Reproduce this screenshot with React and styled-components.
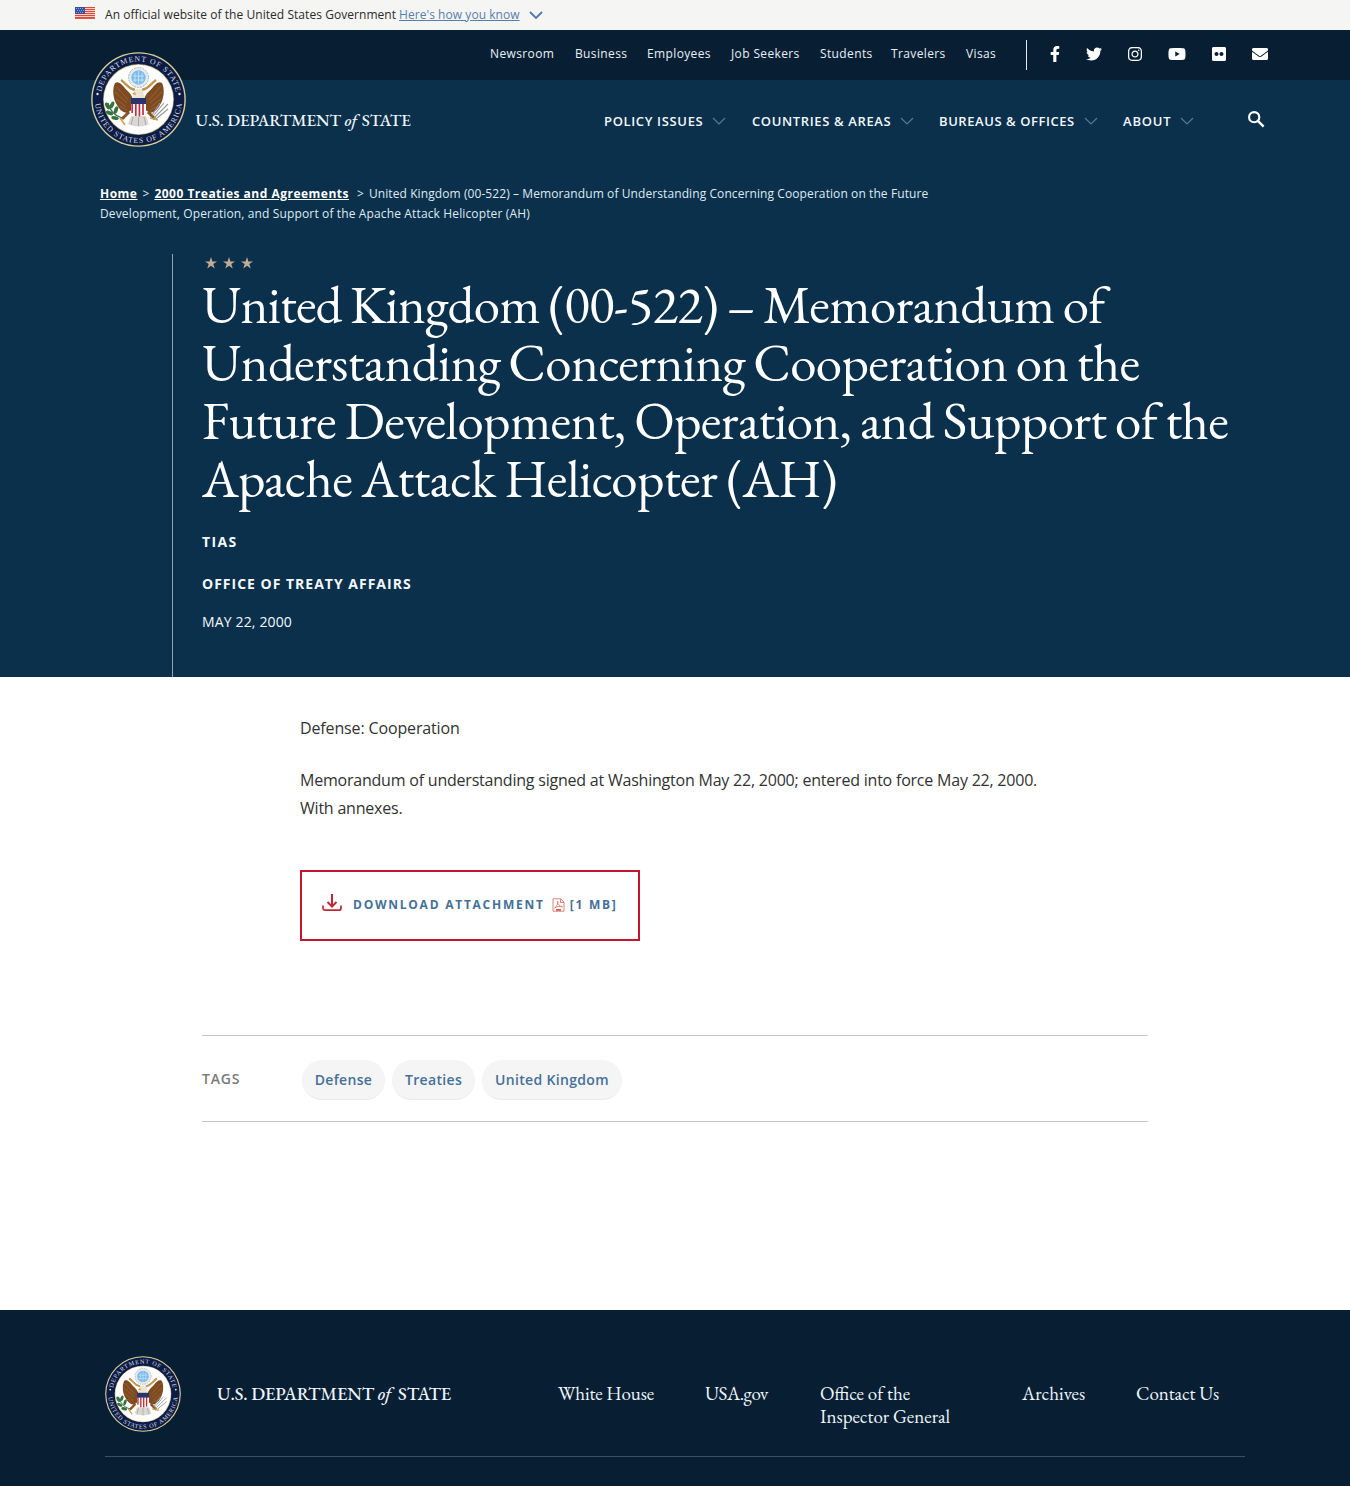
import React from "react";
import styled, { createGlobalStyle } from "styled-components";
import { FaFacebookF, FaTwitter, FaInstagram, FaYoutube, FaFlickr, FaEnvelope } from "react-icons/fa";

const navy = "#081f33";
const blue = "#0b304b";
const link = "#457099";
const serif = '"EB Garamond", "Liberation Serif", serif';

const GlobalStyle = createGlobalStyle`
  *, *::before, *::after { box-sizing: border-box; }
  body { margin: 0; background: #fff; font-family: "Open Sans", "Noto Sans", sans-serif; color: #323232; }
  p, h1 { margin: 0; }
  a { color: inherit; text-decoration: none; }
  svg { display: block; flex: none; }
`;

const Page = styled.div`
  width: 1350px;
  height: 1486px;
  overflow: hidden;
  display: flex;
  flex-direction: column;
`;

const Banner = styled.div`
  height: 30px;
  padding-left: 75px;
  background: #f5f5f4;
  display: flex;
  align-items: center;
  font-size: 12px;
  line-height: 30px;
  letter-spacing: 0.05px;
  color: #2b2b2b;
  white-space: nowrap;
  > svg:first-child { margin: -4px 10px 0 0; }
  a { color: #5580ac; text-decoration: underline; margin: 0 9px 0 3px; }
`;

const TopBar = styled.div`
  height: 50px;
  padding-left: 490px;
  background: ${navy};
  display: flex;
`;

const TopNav = styled.nav`
  display: grid;
  grid-template-columns: 85px 72px 84px 89px 71px 75px 60px;
  font-size: 12px;
  line-height: 48px;
  letter-spacing: 0.37px;
  color: #e8f0f7;
  white-space: nowrap;
`;

const Social = styled.div`
  height: 30px;
  margin-top: 10px;
  padding-left: 23px;
  border-left: 1px solid #e6edf2;
  display: flex;
  align-items: center;
  gap: 26px;
  color: #fff;
`;

const SocialLink = styled.a`
  width: ${(p) => p.$w}px;
  margin-top: -2px;
  svg { width: ${(p) => p.$w}px; height: 16px; }
`;

const Hero = styled.div`
  height: 597px;
  background: ${blue};
  display: flex;
  flex-direction: column;
`;

const MainBar = styled.div`
  height: 104px;
  padding-left: 91px;
  display: flex;
`;

const Logo = styled.div`
  width: 513px;
  margin-top: -28px;
  display: flex;
`;

const Wordmark = styled.span`
  font-family: ${serif};
  font-size: ${(p) => p.$size}px;
  font-weight: 500;
  line-height: 24px;
  letter-spacing: ${(p) => p.$ls}px;
  margin: ${(p) => p.$margin};
  color: #eef5fb;
  white-space: nowrap;
  i { margin-right: ${(p) => p.$gap}px; }
`;

const MainNav = styled.nav`
  width: 641px;
  display: grid;
  grid-template-columns: 148px 187px 184px 122px;
  padding-top: 30px;
`;

const MainLink = styled.a`
  height: 22px;
  display: flex;
  align-items: center;
  gap: 9px;
  font-size: 13px;
  font-weight: 600;
  letter-spacing: ${(p) => p.$ls}px;
  color: #f2f8fd;
  white-space: nowrap;
`;

const SearchButton = styled.a`
  padding: 31px 0 0 3px;
  color: #fff;
`;

const Crumbs = styled.div`
  width: 860px;
  margin-left: 100px;
  height: 70px;
  font-size: 12px;
  line-height: 20px;
  letter-spacing: 0.09px;
  color: #dfeaf3;
  white-space: nowrap;
  a { font-weight: 700; color: #fff; text-decoration: underline; letter-spacing: 0.49px; }
`;

const CrumbTail = styled.span`
  letter-spacing: 0.135px;
`;

const Sep = styled.span`
  margin: 0 5px 0 ${(p) => p.$left}px;
`;

const TitleBlock = styled.div`
  flex: 1;
  margin-left: 172px;
  padding-left: 30px;
  border-left: 1px solid #92a3ad;
`;

const Stars = styled.div`
  display: flex;
  gap: 6px;
  padding: 3px 0 0 2px;
  color: #c4ab93;
`;

const Title = styled.h1`
  margin: 7px 0 0 -1px;
  font-family: ${serif};
  font-weight: 400;
  font-size: 53px;
  line-height: 58px;
  color: #fff;
  white-space: nowrap;
`;

const TitleLine = styled.span`
  display: block;
  letter-spacing: ${(p) => p.$ls}px;
  word-spacing: ${(p) => p.$ws}px;
`;

const Meta = styled.p`
  margin: ${(p) => p.$top}px 0 0 -1px;
  font-size: 14px;
  line-height: 20px;
  font-weight: ${(p) => (p.$bold ? 700 : 400)};
  letter-spacing: ${(p) => p.$ls}px;
  color: #f4f9fd;
`;

const Content = styled.main`
  flex: 1;
  padding: 37px 0 0 300px;
`;

const Body = styled.p`
  font-size: 16px;
  line-height: 28px;
  letter-spacing: ${(p) => p.$ls}px;
  margin-bottom: 24px;
  white-space: nowrap;
`;

const Download = styled.a`
  width: 340px;
  height: 71px;
  margin-top: 48px;
  padding: 0 0 2px 19px;
  border: 2px solid #c5142f;
  display: flex;
  align-items: center;
  font-size: 12px;
  font-weight: 700;
  letter-spacing: 1.75px;
  color: ${link};
  white-space: nowrap;
  > svg:first-child { margin: -4px 10px 0 0; }
`;

const Pdf = styled.span`
  margin: 1px 5px 0 7px;
`;

const Tags = styled.section`
  width: 946px;
  height: 87px;
  margin: 94px 0 0 -98px;
  border: 1px solid #c6c6c6;
  border-width: 1px 0;
  display: flex;
  align-items: center;
  gap: 7px;
`;

const TagLabel = styled.span`
  width: 93px;
  font-size: 14px;
  font-weight: 600;
  letter-spacing: 0.8px;
  color: #7a7a7a;
`;

const Tag = styled.a`
  width: ${(p) => p.$w}px;
  height: 40px;
  margin-top: 2px;
  border-radius: 20px;
  background: #f5f5f5;
  border-bottom: 1px solid #e9e9e9;
  text-align: center;
  font-size: 14px;
  line-height: 39px;
  font-weight: 600;
  color: ${link};
  letter-spacing: 0.33px;
  white-space: nowrap;
`;

const Footer = styled.footer`
  height: 176px;
  background: ${navy};
  padding: 46px 105px 0;
`;

const FooterRow = styled.div`
  height: 101px;
  border-bottom: 1px solid #3d5060;
  display: flex;
`;

const FooterBrand = styled.div`
  width: 453px;
  display: flex;
`;

const FooterNav = styled.nav`
  display: grid;
  grid-template-columns: 147px 115px 202px 114px 100px;
  padding-top: 26px;
  font-family: ${serif};
  font-size: 19px;
  line-height: 23px;
  color: #eef5fb;
  white-space: nowrap;
`;

const FooterLink = styled.a`
  letter-spacing: ${(p) => p.$ls || 0}px;
`;

function Flag() {
  return (
    <svg width="20" height="12" viewBox="0 0 20 12">
      <rect width="20" height="12" fill="#f6ded6" />
      {[0, 2, 4, 6, 8, 10].map((y) => <rect key={y} y={y} width="20" height="1.1" fill="#dc4a3c" />)}
      <rect y="11.1" width="20" height=".9" fill="#dc4a3c" />
      <rect width="10" height="7" fill="#3450a0" />
      {[1, 3, 5].map((y) => [1, 3, 5, 7].map((x) => <rect key={x + "-" + y} x={x + (y === 3 ? 1 : 0)} y={y} width="1" height="1" fill="#8fa0d6" />))}
    </svg>
  );
}

function Star() {
  return (
    <svg width="12" height="12" viewBox="0 0 24 24" fill="currentColor">
      <path d="M12 0l2.9 8.8H24l-7.4 5.4 2.9 9L12 17.7 4.500 23.200l2.900-9L0 8.800h9.100z" />
    </svg>
  );
}

function Chevron({ color = "#587d97", stroke = 1.1 }) {
  return (
    <svg width="14" height="8" viewBox="0 0 14 8" fill="none" stroke={color} strokeWidth={stroke}>
      <path d="M1 1l6 6 6-6" />
    </svg>
  );
}

function SearchIcon() {
  return (
    <svg width="17" height="17" viewBox="0 0 17 17" fill="none" stroke="currentColor">
      <circle cx="6.2" cy="6.2" r="5.100" strokeWidth="2.100" />
      <path d="M9.900 9.900l5.700 5.700" strokeWidth="2.500" />
    </svg>
  );
}

function Wing() {
  return (
    <g>
      <path d="M45 50C43 44 39 42 36 38 33 35 31 32 27 34 24 40 25 50 29 56 31 60 34 63 39 64L45 60z" fill="#7d4a22" />
      <path d="M28 37l12 14M27 43l12 11M28 50l10 8M31 57l8 4" stroke="#a56f35" strokeWidth=".7" fill="none" />
    </g>
  );
}

function Seal({ size, id }) {
  return (
    <svg width={size} height={size} viewBox="3 3 95 95">
      <circle cx="50.5" cy="50.5" r="47.3" fill="#d9cf9a" />
      <circle cx="50.5" cy="50.5" r="45.9" fill="#0c1c45" />
      <circle cx="50.5" cy="50.5" r="35.4" fill="#b9ad7c" />
      <circle cx="50.5" cy="50.5" r="34.7" fill="#fff" />
      <path id={id + "t"} d="M12.500 50.500a38 38 0 0 1 76 0" fill="none" />
      <path id={id + "b"} d="M7 50.500a43.500 43.500 0 0 0 87 0" fill="none" />
      <g fill="#d5dbe2" fontFamily="Liberation Serif, serif" fontSize="7.800" textAnchor="middle">
        <text textLength="104"><textPath href={"#" + id + "t"} startOffset="50%">DEPARTMENT OF STATE</textPath></text>
        <text textLength="128"><textPath href={"#" + id + "b"} startOffset="50%">UNITED STATES OF AMERICA</textPath></text>
      </g>
      <circle cx="9.500" cy="45" r="1.200" fill="#e8e8e0" />
      <circle cx="91.500" cy="45" r="1.200" fill="#e8e8e0" />
      <circle cx="50.500" cy="28.500" r="10" fill="#e4eaf0" stroke="#a9b4bd" strokeWidth="1" strokeDasharray="2 1" />
      <circle cx="50.500" cy="28.500" r="7.200" fill="#7dbbe8" />
      <g stroke="#e6f3fc" strokeWidth=".6"><path d="M47 24v9M50.500 22v13M54 24v9M45 27h11M45 31h11" /></g>
      <g stroke="#bd9448" strokeWidth="2.400" fill="none"><path d="M33 31c5 3 6 8 14 10" /><path d="M68 31c-5 3-6 8-14 10" /></g>
      <Wing />
      <g transform="translate(101 0) scale(-1 1)"><Wing /></g>
      <path d="M46 42c2-3 7-3 9 0l2 8H44z" fill="#ece5d4" />
      <path d="M47 43l-3 2 4 1z" fill="#caa23e" />
      <path d="M41 63l-7 7M60 63l7 7" stroke="#8a5527" strokeWidth="3" />
      <path d="M43 67h15l3 8q-10 5-21 0z" fill="#d9d8d4" />
      <path d="M45 68l-2 8M50.500 68v9M56 68l2 8" stroke="#a49e94" strokeWidth=".8" />
      <path d="M43 50h15v11q-1 5-7.500 7Q44 66 43 61z" fill="#fff" />
      <path d="M44.200 54v10M47.800 54v13M51.400 54v13.500M55 54v12" stroke="#bd2f3e" strokeWidth="1.700" />
      <path d="M43 49h15v6H43z" fill="#27356c" />
      <path d="M34 69C27 67 22 62 20 54" stroke="#36713e" strokeWidth="1.200" fill="none" />
      <g fill="#34733d">
        <ellipse cx="19.500" cy="57" rx="1.900" ry="3.700" transform="rotate(-30 19.500 57)" />
        <ellipse cx="24" cy="56" rx="1.900" ry="3.700" transform="rotate(24 24 56)" />
        <ellipse cx="21.500" cy="64" rx="1.900" ry="3.800" transform="rotate(-65 21.500 64)" />
        <ellipse cx="28" cy="61" rx="1.900" ry="3.800" transform="rotate(20 28 61)" />
        <ellipse cx="27" cy="69" rx="1.900" ry="3.800" transform="rotate(-78 27 69)" />
      </g>
      <path d="M66 69l14-14M65 67l11-13M68 70l12-10M64 66l8-12" stroke="#95979a" strokeWidth="1.100" />
      <path d="M62 69l8 2M32 69l5 7" stroke="#c6a24b" strokeWidth="1.500" />
    </svg>
  );
}

function DownloadIcon() {
  return (
    <svg width="22" height="18" viewBox="0 0 22 18" fill="none" stroke="#c0283a" strokeWidth="2">
      <path d="M11 0v12M6.500 8l4.500 4.500L15.500 8" />
      <path d="M2 11.500v2.700a2 2 0 0 0 2 2h14a2 2 0 0 0 2-2v-2.700" strokeWidth="1.700" />
    </svg>
  );
}

function PdfIcon() {
  return (
    <svg width="13" height="14" viewBox="0 0 13 14" fill="none" stroke="#d98575" strokeWidth="1">
      <path d="M1 .8h7.500l3.500 3.400v9H1zM8.500 1v3.500H12" />
      <path d="M2.500 10C5 8.500 6.300 5 5.700 3.200c-.8 1.500 1.600 5.400 4.800 5.600C8 7.800 4.700 8.500 2.500 10z" />
      <path d="M4 11.900h5" stroke="#bb4038" strokeWidth="1.500" />
    </svg>
  );
}

const social = [
  [FaFacebookF, 10],
  [FaTwitter, 16],
  [FaInstagram, 14],
  [FaYoutube, 18],
  [FaFlickr, 14],
  [FaEnvelope, 16],
];

const mainLinks = [
  ["POLICY ISSUES", 0.65],
  ["COUNTRIES & AREAS", 0.63],
  ["BUREAUS & OFFICES", 0.56],
  ["ABOUT", 0.8],
];

const titleLines = [
  ["United Kingdom (00-522) – Memorandum of", -0.67, -1.5],
  ["Understanding Concerning Cooperation on the", -0.6, -1.9],
  ["Future Development, Operation, and Support of the", -0.65, -1.2],
  ["Apache Attack Helicopter (AH)", -0.6, -0.8],
];

export default function App() {
  return (
    <Page>
      <GlobalStyle />
      <Banner>
        <Flag />
        <span>An official website of the United States Government</span>
        <a href="#">Here's how you know</a>
        <Chevron color="#4d7aa8" stroke={1.8} />
      </Banner>
      <TopBar>
        <TopNav>
          {["Newsroom", "Business", "Employees", "Job Seekers", "Students", "Travelers", "Visas"].map((t) => <a href="#" key={t}>{t}</a>)}
        </TopNav>
        <Social>
          {social.map(([Icon, w], i) => <SocialLink href="#" key={i} $w={w}><Icon /></SocialLink>)}
        </Social>
      </TopBar>
      <Hero>
        <MainBar>
          <Logo>
            <Seal size={95} id="head" />
            <Wordmark $size={17} $ls={-0.13} $gap={1.3} $margin="56px 0 0 9.500px">U.S. DEPARTMENT <i>of</i> STATE</Wordmark>
          </Logo>
          <MainNav>
            {mainLinks.map(([t, ls]) => <MainLink href="#" key={t} $ls={ls}>{t}<Chevron /></MainLink>)}
          </MainNav>
          <SearchButton href="#"><SearchIcon /></SearchButton>
        </MainBar>
        <Crumbs>
          <a href="#">Home</a><Sep $left={5}>&gt;</Sep><a href="#">2000 Treaties and Agreements</a><Sep $left={8}>&gt;</Sep>United Kingdom (00-522) – Memorandum of Understanding Concerning Cooperation on the Future<br />
          <CrumbTail>Development, Operation, and Support of the Apache Attack Helicopter (AH)</CrumbTail>
        </Crumbs>
        <TitleBlock>
          <Stars><Star /><Star /><Star /></Stars>
          <Title>
            {titleLines.map(([t, ls, ws]) => <TitleLine key={t} $ls={ls} $ws={ws}>{t}</TitleLine>)}
          </Title>
          <Meta $bold $top={24} $ls={1.4}>TIAS</Meta>
          <Meta $bold $top={22} $ls={1}>OFFICE OF TREATY AFFAIRS</Meta>
          <Meta $top={18} $ls={0.15}>MAY 22, 2000</Meta>
        </TitleBlock>
      </Hero>
      <Content>
        <Body $ls={-0.14}>Defense: Cooperation</Body>
        <Body $ls={-0.215}>Memorandum of understanding signed at Washington May 22, 2000; entered into force May 22, 2000.<br />With annexes.</Body>
        <Download href="#">
          <DownloadIcon />DOWNLOAD ATTACHMENT<Pdf><PdfIcon /></Pdf>[1 MB]
        </Download>
        <Tags>
          <TagLabel>TAGS</TagLabel>
          <Tag href="#" $w={83}>Defense</Tag>
          <Tag href="#" $w={83}>Treaties</Tag>
          <Tag href="#" $w={140}>United Kingdom</Tag>
        </Tags>
      </Content>
      <Footer>
        <FooterRow>
          <FooterBrand>
            <Seal size={76} id="foot" />
            <Wordmark $size={18.3} $ls={-0.1} $gap={3} $margin="26px 0 0 36px">U.S. DEPARTMENT <i>of</i> STATE</Wordmark>
          </FooterBrand>
          <FooterNav>
            <FooterLink href="#" $ls={-0.12}>White House</FooterLink>
            <FooterLink href="#" $ls={-0.45}>USA.gov</FooterLink>
            <FooterLink href="#">Office of the<br />Inspector General</FooterLink>
            <FooterLink href="#">Archives</FooterLink>
            <FooterLink href="#" $ls={-0.1}>Contact Us</FooterLink>
          </FooterNav>
        </FooterRow>
      </Footer>
    </Page>
  );
}
